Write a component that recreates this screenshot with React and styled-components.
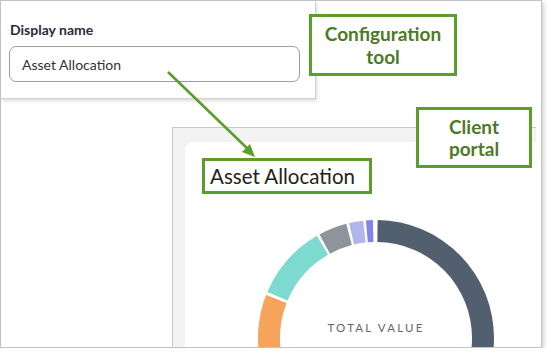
import React from 'react';
import styled, { createGlobalStyle } from 'styled-components';

const GlobalStyle = createGlobalStyle`
  html, body {
    margin: 0;
    padding: 0;
    background: #fff;
  }
  body {
    font-family: Lato, 'Noto Sans', sans-serif;
  }
  * {
    box-sizing: border-box;
  }
`;

const GREEN = '#5c9e2b';

const Frame = styled.div`
  position: relative;
  width: 542px;
  height: 348px;
  border: 1px solid #c3c3c3;
  box-shadow: 2px 2px 4px rgba(0, 0, 0, 0.18);
  background: #fff;
  display: flex;
  flex-direction: column;
  overflow: hidden;
`;

const ConfigPanel = styled.div`
  width: 315px;
  height: 98px;
  flex-shrink: 0;
  padding: 20px 0 0 8px;
  background: #fff;
  border-right: 1px solid #d0d0d0;
  border-bottom: 1px solid #d0d0d0;
  box-shadow: 1px 2px 4px rgba(0, 0, 0, 0.14);
`;

const Label = styled.div`
  font-size: 14px;
  line-height: 17px;
  font-weight: 700;
  color: #2b2a3d;
  padding-left: 1px;
`;

const Input = styled.div`
  margin-top: 8px;
  width: 291px;
  height: 36px;
  border: 1px solid #9c9c9c;
  border-radius: 7px;
  padding: 0 12px;
  display: flex;
  align-items: center;
  font-size: 14px;
  color: #333;
`;

const PortalFrame = styled.div`
  flex: 1;
  margin: 28px 0 0 171px;
  width: 364px;
  border-top: 1px solid #c8c8c8;
  border-left: 1px solid #c8c8c8;
  background: #f3f3f3;
  padding: 14px 0 0 12px;
  display: flex;
  overflow: hidden;
`;

const Card = styled.div`
  flex: 1;
  background: #fff;
  border-top-left-radius: 8px;
  padding: 16px 0 0 17px;
  overflow: hidden;
`;

const Title = styled.div`
  width: 170px;
  height: 36px;
  border: 3px solid ${GREEN};
  padding: 3px 0 0 5px;
  font-size: 20.5px;
  line-height: 24px;
  color: #222;
`;

const Chart = styled.svg`
  display: block;
  margin: 24px 0 0 54px;
`;

const Note = styled.div`
  position: absolute;
  left: ${(p) => p.$x}px;
  top: ${(p) => p.$y}px;
  width: ${(p) => p.$w}px;
  height: ${(p) => p.$h}px;
  border: 3px solid ${GREEN};
  background: #fff;
  display: flex;
  align-items: center;
  justify-content: center;
  text-align: center;
  font-size: 19px;
  line-height: ${(p) => p.$lh}px;
  font-weight: 700;
  color: #4d7a27;
`;

const Overlay = styled.svg`
  position: absolute;
  left: 0;
  top: 0;
  pointer-events: none;
`;

const CX = 120;
const CY = 120;
const R = 118;
const r = 96;

const pt = (a, rad) => {
  const t = (a * Math.PI) / 180;
  return [CX + rad * Math.sin(t), CY - rad * Math.cos(t)];
};

const arc = (a0, a1) => {
  const large = a1 - a0 > 180 ? 1 : 0;
  const [x0, y0] = pt(a0, R);
  const [x1, y1] = pt(a1, R);
  const [x2, y2] = pt(a1, r);
  const [x3, y3] = pt(a0, r);
  return `M${x0} ${y0} A${R} ${R} 0 ${large} 1 ${x1} ${y1} L${x2} ${y2} A${r} ${r} 0 ${large} 0 ${x3} ${y3} Z`;
};

const segments = [
  { from: 0.8, to: 180, color: '#525f6e' },
  { from: -4.9, to: -1.5, color: '#7f86e6' },
  { from: -13.2, to: -6.2, color: '#b1b5ec' },
  { from: -28.6, to: -14.6, color: '#8e949b' },
  { from: -67, to: -30, color: '#7ddad0' },
  { from: -180, to: -68.6, color: '#f6a45c' },
];

export default function App() {
  return (
    <>
      <GlobalStyle />
      <Frame>
        <ConfigPanel>
          <Label>Display name</Label>
          <Input>Asset Allocation</Input>
        </ConfigPanel>

        <PortalFrame>
          <Card>
            <Title>Asset Allocation</Title>
            <Chart width="240" height="130" viewBox="0 0 240 130">
              {segments.map((s) => (
                <path key={s.color} d={arc(s.from, s.to)} fill={s.color} />
              ))}
              <text
                x="120"
                y="114"
                textAnchor="middle"
                fontFamily="Lato, sans-serif"
                fontSize="11.5"
                letterSpacing="2.2"
                fill="#5f6670"
              >
                TOTAL VALUE
              </text>
            </Chart>
          </Card>
        </PortalFrame>

        <Note $x={308} $y={13} $w={148} $h={62} $lh={23}>
          Configuration
          <br />
          tool
        </Note>
        <Note $x={415} $y={106} $w={116} $h={61} $lh={22}>
          Client
          <br />
          portal
        </Note>

        <Overlay width="540" height="346">
          <line x1="167" y1="71" x2="249" y2="150" stroke={GREEN} strokeWidth="2.6" />
          <polygon points="254,156 241,151 249,143" fill={GREEN} />
        </Overlay>
      </Frame>
    </>
  );
}
